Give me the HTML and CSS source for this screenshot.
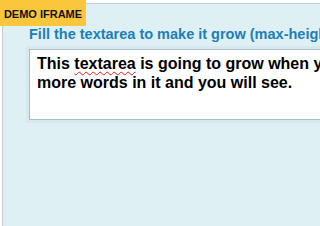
FILE: index.html
```html
<!DOCTYPE html>
<html>
<head>
<meta charset="utf-8">
<link rel="stylesheet" href="styles.css">
</head>
<body>
<div class="frame">
  <h3 class="title">Fill the textarea to make it grow (max-height: 200px)</h3>
  <div class="area">This <span class="misspelt">textarea</span> is going to grow when you fill it with<br>more words in it and you will see.</div>
</div>
<div class="badge">DEMO IFRAME</div>
</body>
</html>
```
FILE: styles.css
```css
html, body {
  margin: 0;
  padding: 0;
  width: 320px;
  height: 226px;
  overflow: hidden;
  background: #ffffff;
  font-family: "Liberation Sans", Arial, sans-serif;
}
.frame {
  position: relative;
  margin: 3px 0 0 2px;
  width: 560px;
  height: 240px;
  border: 1px solid #c6cfd4;
  background: #dff0f4;
  padding: 22px 0 0 26px;
  box-sizing: border-box;
}
.title {
  margin: 0;
  font-size: 14.5px;
  line-height: 17px;
  font-weight: bold;
  color: #1b7fb8;
  white-space: nowrap;
}
.area {
  margin-top: 6px;
  width: 480px;
  height: 71px;
  box-sizing: border-box;
  background: #fff;
  border: 1px solid #a9c0c8;
  box-shadow: 0 0 0 3px #d5e9ee;
  padding: 4px 7px;
  font-size: 16px;
  line-height: 19px;
  font-weight: bold;
  color: #000;
  white-space: nowrap;
}
.misspelt {
  text-decoration: underline wavy #e02020;
  text-decoration-thickness: 1px;
  text-underline-offset: 2px;
}
.badge {
  position: absolute;
  left: 0;
  top: 0;
  width: 86px;
  height: 26px;
  box-sizing: border-box;
  padding-top: 2px;
  background: #f9c63c;
  color: #111;
  font-size: 11px;
  font-weight: bold;
  line-height: 24px;
  text-align: center;
}
```
